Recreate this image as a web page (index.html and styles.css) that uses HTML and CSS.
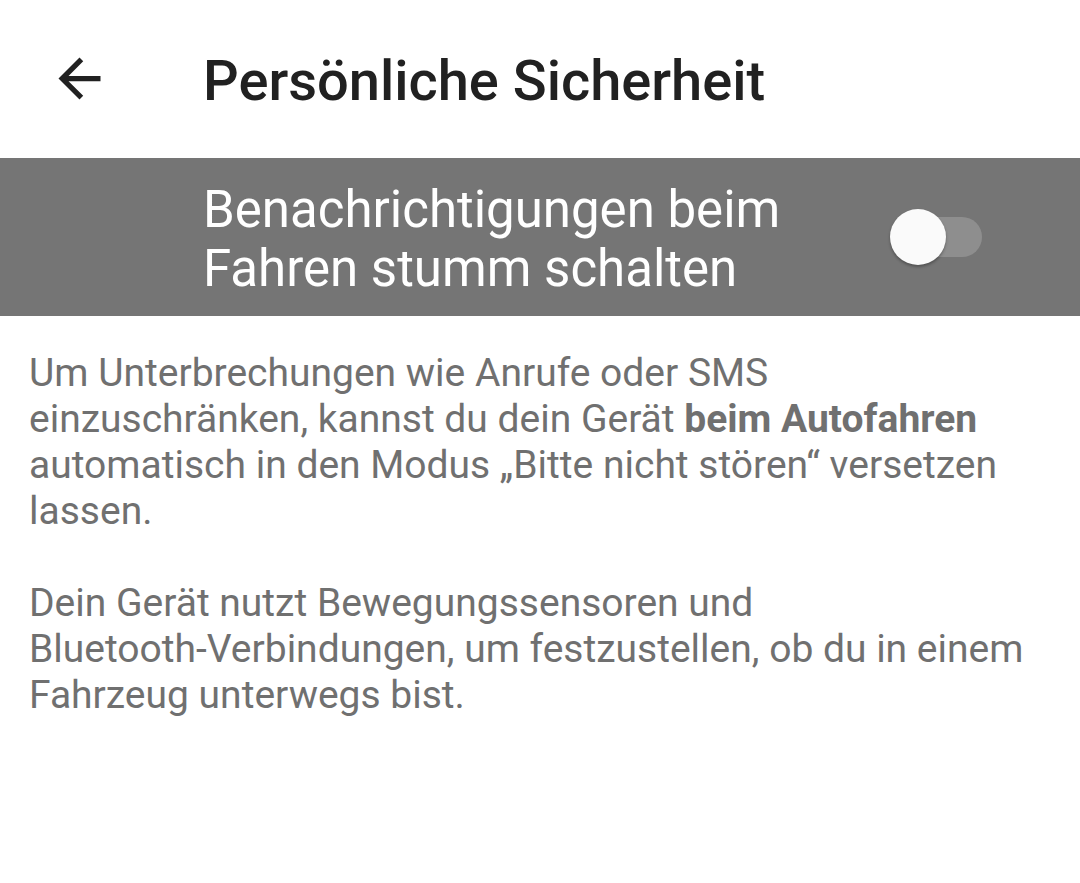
FILE: index.html
```html
<!DOCTYPE html>
<html lang="de">
<head>
  <meta charset="UTF-8">
  <title>Persönliche Sicherheit</title>
  <meta name="viewport" content="width=device-width, initial-scale=1.0">
  <link rel="stylesheet" href="styles.css">
</head>
<body>

  <div class="toolbar">
    <button class="back-btn" aria-label="Zurück">
      <svg viewBox="0 0 24 24" width="63" height="63">
        <path d="M20 11H7.83l5.59-5.59L12 4l-8 8 8 8 1.41-1.41L7.83 13H20v-2z" fill="#212121"/>
      </svg>
    </button>
    <h1>Persönliche Sicherheit</h1>
  </div>

  <div class="switch-bar">
    <div class="switch-label">Benachrichtigungen beim<br>Fahren stumm schalten</div>
    <div class="switch">
      <div class="switch-track"></div>
      <div class="switch-thumb"></div>
    </div>
  </div>

  <div class="content">
    <p>Um Unterbrechungen wie Anrufe oder SMS einzuschränken, kannst du dein Gerät <b>beim Autofahren</b> automatisch in den Modus „Bitte nicht stören“ versetzen lassen.</p>
    <p>Dein Gerät nutzt Bewegungssensoren und <span class="nowrap">Bluetooth-Verbindungen,</span> um festzustellen, ob du in einem Fahrzeug unterwegs bist.</p>
  </div>

</body>
</html>
```

FILE: styles.css
```css
body {
  font-family: Roboto, "Noto Sans", sans-serif;
  margin: 0;
  padding: 0;
  background: #ffffff;
  width: 1080px;
  height: 883px;
  overflow: hidden;
}

.toolbar {
  height: 158px;
  display: flex;
  align-items: center;
  box-sizing: border-box;
  padding-left: 48px;
}

.back-btn {
  background: none;
  border: none;
  padding: 0;
  width: 63px;
  height: 63px;
  display: flex;
  margin-top: -2px;
}

.toolbar h1 {
  margin: 3px 0 0 92px;
  font-size: 56px;
  font-weight: 500;
  color: #212121;
}

.switch-bar {
  height: 158px;
  background: #757575;
  display: flex;
  align-items: center;
  justify-content: space-between;
  box-sizing: border-box;
  padding: 0 98px 0 203px;
}

.switch-label {
  color: #ffffff;
  font-size: 51px;
  line-height: 59px;
  margin-top: 3px;
}

.switch {
  position: relative;
  width: 92px;
  height: 56px;
}

.switch-track {
  position: absolute;
  left: 10px;
  right: 0;
  top: 8px;
  height: 40px;
  border-radius: 20px;
  background: #8e8e8e;
}

.switch-thumb {
  position: absolute;
  left: 0;
  top: 0;
  width: 56px;
  height: 56px;
  border-radius: 50%;
  background: #fafafa;
  box-shadow: 0 2px 3px rgba(0, 0, 0, 0.3);
}

.content {
  padding: 34px 40px 0 29px;
}

.content p {
  margin: 0 0 46px;
  font-size: 39px;
  line-height: 46px;
  color: #707070;
}

.content b {
  font-weight: 700;
}

.nowrap {
  white-space: nowrap;
}
```
